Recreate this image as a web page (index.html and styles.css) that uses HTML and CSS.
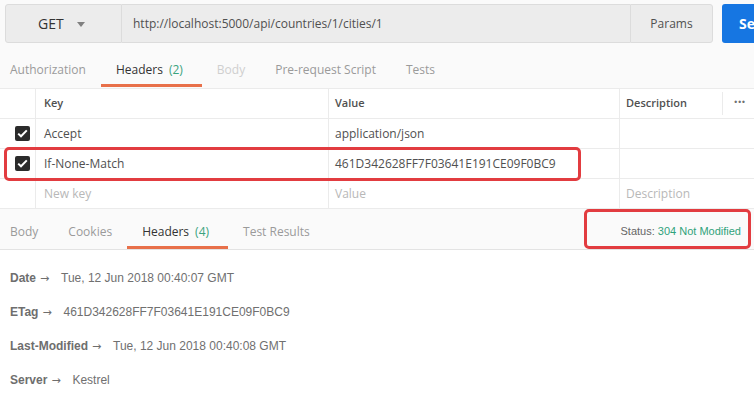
FILE: index.html
```html
<!DOCTYPE html>
<html>
<head>
<meta charset="utf-8">
<link rel="stylesheet" href="styles.css">
</head>
<body>
<div class="page">
  <div class="urlbar">
    <div class="method">GET <span class="caret"></span></div>
    <div class="url">http://localhost:5000/api/countries/1/cities/1</div>
    <div class="params">Params</div>
    <div class="send">Send</div>
  </div>

  <div class="tabs req-tabs">
    <div class="tab first muted">Authorization</div>
    <div class="tab active">Headers <span class="count">(2)</span></div>
    <div class="tab disabled">Body</div>
    <div class="tab muted">Pre-request Script</div>
    <div class="tab muted">Tests</div>
  </div>

  <div class="table">
    <div class="row head">
      <div class="cell chk"></div>
      <div class="cell key">Key</div>
      <div class="cell val">Value</div>
      <div class="cell desc">Description<span class="sep"></span><span class="dots">•••</span></div>
    </div>
    <div class="row">
      <div class="cell chk"><span class="box"><svg width="11" height="9" viewBox="0 0 11 9"><path d="M1.2 4.6 L4 7.3 L9.8 1.4" fill="none" stroke="#fff" stroke-width="2"/></svg></span></div>
      <div class="cell key">Accept</div>
      <div class="cell val">application/json</div>
      <div class="cell desc"></div>
    </div>
    <div class="row">
      <div class="cell chk"><span class="box"><svg width="11" height="9" viewBox="0 0 11 9"><path d="M1.2 4.6 L4 7.3 L9.8 1.4" fill="none" stroke="#fff" stroke-width="2"/></svg></span></div>
      <div class="cell key">If-None-Match</div>
      <div class="cell val">461D342628FF7F03641E191CE09F0BC9</div>
      <div class="cell desc"></div>
    </div>
    <div class="row">
      <div class="cell chk"></div>
      <div class="cell key ph">New key</div>
      <div class="cell val ph">Value</div>
      <div class="cell desc ph">Description</div>
    </div>
    <div class="hl hl-row"></div>
  </div>

  <div class="resp-bar">
    <div class="tabs resp-tabs">
      <div class="tab first muted">Body</div>
      <div class="tab muted">Cookies</div>
      <div class="tab active">Headers <span class="count">(4)</span></div>
      <div class="tab muted">Test Results</div>
    </div>
    <div class="status">Status: <span class="code">304 Not Modified</span></div>
    <div class="hl hl-status"></div>
  </div>

  <div class="resp-headers">
    <div class="hrow"><span class="hk">Date<span class="arr">→</span></span><span class="hv">Tue, 12 Jun 2018 00:40:07 GMT</span></div>
    <div class="hrow"><span class="hk">ETag<span class="arr">→</span></span><span class="hv">461D342628FF7F03641E191CE09F0BC9</span></div>
    <div class="hrow"><span class="hk">Last-Modified<span class="arr">→</span></span><span class="hv">Tue, 12 Jun 2018 00:40:08 GMT</span></div>
    <div class="hrow"><span class="hk">Server<span class="arr">→</span></span><span class="hv">Kestrel</span></div>
  </div>
</div>
</body>
</html>
```
FILE: styles.css
```css
* { box-sizing: border-box; }
html, body { margin: 0; padding: 0; }
body {
  background: #fafafa;
  font-family: "Open Sans", "Liberation Sans", sans-serif;
  font-size: 12px;
  color: #505050;
  width: 754px;
  height: 409px;
  overflow: hidden;
}
.page { width: 754px; height: 409px; overflow: hidden; }

.urlbar {
  display: flex;
  padding: 4px 0 0 5px;
  height: 44px;
  overflow: hidden;
}
.urlbar > div { flex: none; }
.method {
  width: 117px;
  height: 39px;
  background: #ececec;
  border: 1px solid #dcdcdc;
  border-radius: 3px 0 0 3px;
  display: flex;
  align-items: center;
  padding-left: 32px;
  font-size: 14px;
  color: #333;
}
.caret {
  display: inline-block;
  margin-left: 13px;
  width: 0; height: 0;
  border-left: 4px solid transparent;
  border-right: 4px solid transparent;
  border-top: 5px solid #808080;
  margin-top: 1px;
}
.url {
  width: 508px;
  height: 39px;
  background: #ececec;
  border-top: 1px solid #dcdcdc;
  border-bottom: 1px solid #dcdcdc;
  display: flex;
  align-items: center;
  padding-left: 11px;
  color: #505050;
}
.params {
  width: 83px;
  height: 39px;
  background: #ececec;
  border: 1px solid #dcdcdc;
  border-radius: 0 3px 3px 0;
  display: flex;
  align-items: center;
  justify-content: center;
  color: #505050;
}
.send {
  margin-left: 9px;
  width: 90px;
  height: 39px;
  background: #1676e2;
  border-radius: 3px;
  color: #fff;
  font-weight: bold;
  font-size: 14px;
  display: flex;
  align-items: center;
  padding-left: 17px;
}

.tabs { display: flex; }
.tab {
  padding: 0 15px;
  display: flex;
  align-items: center;
  border-bottom: 3px solid transparent;
  white-space: nowrap;
}
.tab.first { padding-left: 10px; }
.tab.muted { color: #9a9a9a; }
.tab.disabled { color: #cfcfcf; }
.tab.active { color: #333; border-bottom-color: #e8704a; padding-right: 19px; }
.count { color: #3aa37e; margin-left: 6px; }

.req-tabs { height: 35px; margin-top: 8px; }
.req-tabs .tab { padding-top: 2px; }

.table {
  position: relative;
  margin-top: 1px;
  background: #fff;
  border-top: 1px solid #ebebeb;
}
.row {
  display: flex;
  height: 30px;
  border-bottom: 1px solid #ebebeb;
}
.cell {
  display: flex;
  align-items: center;
  border-right: 1px solid #ebebeb;
  white-space: nowrap;
}
.cell.chk { width: 36px; justify-content: flex-end; padding-right: 5px; }
.cell.key { width: 293px; padding-left: 8px; }
.cell.val { width: 291px; padding-left: 6px; }
.cell.desc { flex: 1; padding-left: 6px; border-right: none; position: relative; }
.head .cell { font-size: 11px; font-weight: 600; color: #505050; padding-bottom: 2px; }
.ph { color: #b8b8b8; }
.box {
  width: 15px; height: 15px;
  background: #2b2b2b;
  border-radius: 2px;
  display: flex;
  align-items: center;
  justify-content: center;
}
.sep {
  position: absolute;
  left: 102px;
  top: 3px;
  bottom: 3px;
  border-left: 1px solid #ebebeb;
}
.dots {
  position: absolute;
  left: 114px;
  top: 6px;
  font-size: 9px;
  letter-spacing: 0.5px;
  color: #707070;
}

.hl {
  position: absolute;
  border: 3px solid #e23c40;
  border-radius: 5px;
  pointer-events: none;
}
.hl-row { left: 4px; top: 58px; width: 577px; height: 34px; }

.resp-bar {
  position: relative;
  display: flex;
  justify-content: space-between;
  height: 41px;
  border-bottom: 1px solid #e3e3e3;
  background: #fafafa;
}
.resp-tabs { height: 40px; }
.resp-tabs .tab { padding-top: 7px; }
.status {
  font-family: "Liberation Sans", Arial, sans-serif;
  font-size: 11px;
  color: #666;
  display: flex;
  align-items: center;
  padding-right: 13px;
  padding-top: 3px;
  white-space: pre;
}
.status .code { color: #2fa27a; }
.hl-status { left: 584px; top: 0; width: 167px; height: 40px; }

.resp-headers {
  background: #fff;
  padding-top: 11px;
  height: 160px;
  font-family: "Liberation Sans", Arial, sans-serif;
  font-size: 12px;
}
.hrow {
  height: 34px;
  display: flex;
  align-items: center;
  padding-left: 10px;
  white-space: nowrap;
}
.hk { font-weight: bold; color: #6e6e6e; margin-right: 8px; }
.arr {
  display: inline-block;
  font-family: "DejaVu Sans", sans-serif;
  font-weight: normal;
  font-size: 11px;
  width: 13px;
  margin-left: 4px;
  color: #6e6e6e;
}
.hv { color: #707070; }
```
